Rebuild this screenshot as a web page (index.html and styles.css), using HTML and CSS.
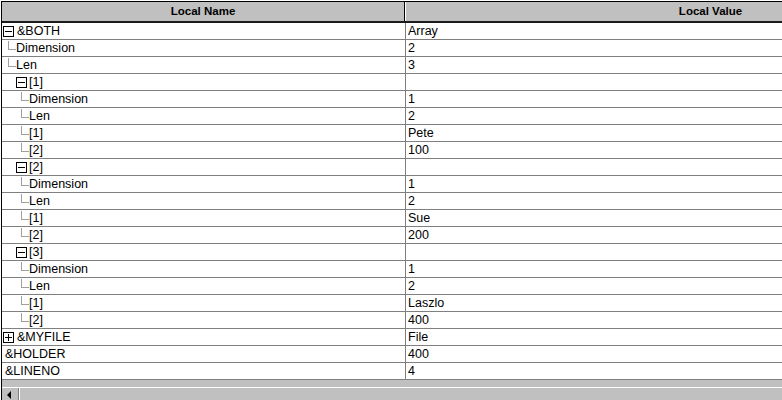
FILE: index.html
```html
<!DOCTYPE html>
<html lang="en">
<head>
  <meta charset="UTF-8" />
  <title>Locals</title>
  <link rel="stylesheet" href="styles.css">
</head>
<body>
  <div class="frame">
    <!-- cabecera -->
    <div class="head">
      <div class="hcell hname">Local Name</div>
      <div class="hcell hvalue">Local Value</div>
    </div>

    <div class="row"><div class="cell name l0"><span class="tog"></span>&amp;BOTH</div><div class="cell value">Array</div></div>
    <div class="row"><div class="cell name l0c"><span class="branch"></span>Dimension</div><div class="cell value">2</div></div>
    <div class="row"><div class="cell name l0c"><span class="branch"></span>Len</div><div class="cell value">3</div></div>

    <div class="row"><div class="cell name l1"><span class="tog"></span>[1]</div><div class="cell value"></div></div>
    <div class="row"><div class="cell name l2"><span class="branch"></span>Dimension</div><div class="cell value">1</div></div>
    <div class="row"><div class="cell name l2"><span class="branch"></span>Len</div><div class="cell value">2</div></div>
    <div class="row"><div class="cell name l2"><span class="branch"></span>[1]</div><div class="cell value">Pete</div></div>
    <div class="row"><div class="cell name l2"><span class="branch"></span>[2]</div><div class="cell value">100</div></div>

    <div class="row"><div class="cell name l1"><span class="tog"></span>[2]</div><div class="cell value"></div></div>
    <div class="row"><div class="cell name l2"><span class="branch"></span>Dimension</div><div class="cell value">1</div></div>
    <div class="row"><div class="cell name l2"><span class="branch"></span>Len</div><div class="cell value">2</div></div>
    <div class="row"><div class="cell name l2"><span class="branch"></span>[1]</div><div class="cell value">Sue</div></div>
    <div class="row"><div class="cell name l2"><span class="branch"></span>[2]</div><div class="cell value">200</div></div>

    <div class="row"><div class="cell name l1"><span class="tog"></span>[3]</div><div class="cell value"></div></div>
    <div class="row"><div class="cell name l2"><span class="branch"></span>Dimension</div><div class="cell value">1</div></div>
    <div class="row"><div class="cell name l2"><span class="branch"></span>Len</div><div class="cell value">2</div></div>
    <div class="row"><div class="cell name l2"><span class="branch"></span>[1]</div><div class="cell value">Laszlo</div></div>
    <div class="row"><div class="cell name l2"><span class="branch"></span>[2]</div><div class="cell value">400</div></div>

    <div class="row"><div class="cell name l0"><span class="tog plus"></span>&amp;MYFILE</div><div class="cell value">File</div></div>
    <div class="row"><div class="cell name lp">&amp;HOLDER</div><div class="cell value">400</div></div>
    <div class="row"><div class="cell name lp">&amp;LINENO</div><div class="cell value">4</div></div>

    <!-- barra de desplazamiento -->
    <div class="hscroll">
      <div class="track">
        <div class="sbtn"><span class="arrow"></span></div>
      </div>
    </div>
  </div>
</body>
</html>
```

FILE: styles.css
```css
html, body { margin: 0; padding: 0; background: #fff; }
body { font-family: "Liberation Sans", Arial, sans-serif; color: #000; }

.frame {
  margin: 1px 0 0 1px;
  width: 781px;
  height: 399px;
  border-left: 1px solid #000;
  border-top: 1px solid #000;
  box-sizing: border-box;
  overflow: hidden;
  display: flex;
  flex-direction: column;
}

.head {
  display: flex;
  flex: none;
  height: 21px;
  background: #c0c0c0;
  border-bottom: 2px solid #1a1a1a;
  box-sizing: border-box;
  width: 1013px;
}
.hcell {
  font-size: 11.5px;
  font-weight: bold;
  line-height: 19px;
  text-align: center;
  box-sizing: border-box;
  flex: none;
}
.hname { width: 403px; border-right: 1px solid #000; }
.hvalue { width: 610px; border-left: 1px solid #fff; }

.row {
  display: flex;
  flex: none;
  width: 1013px;
  height: 17px;
  border-bottom: 1px solid #808080;
  box-sizing: border-box;
  font-size: 12.5px;
  line-height: 16px;
}
.cell { flex: none; box-sizing: border-box; white-space: nowrap; }
.cell.name {
  width: 404px;
  border-right: 1px solid #808080;
  display: flex;
  align-items: flex-start;
}
.cell.value { width: 609px; padding-left: 2px; }

/* sangrías del árbol */
.l0  { padding-left: 1px; }
.l0c { padding-left: 6px; }
.l1  { padding-left: 14px; }
.l2  { padding-left: 19px; }
.lp  { padding-left: 3px; }

.tog {
  position: relative;
  flex: none;
  width: 11px;
  height: 11px;
  margin-top: 3px;
  margin-right: 3px;
  border: 1px solid #000;
  box-sizing: border-box;
  background: #fff;
}
.l1 .tog { margin-right: 2px; }
.tog::before {
  content: "";
  position: absolute;
  left: 1px;
  top: 4px;
  width: 7px;
  height: 1px;
  background: #000;
}
.tog.plus::after {
  content: "";
  position: absolute;
  left: 4px;
  top: 1px;
  width: 1px;
  height: 7px;
  background: #000;
}

.branch {
  flex: none;
  width: 8px;
  height: 9px;
  margin-top: 1px;
  border-left: 1px solid #a0a0a0;
  border-bottom: 1px solid #a0a0a0;
  box-sizing: border-box;
}

.hscroll {
  flex: none;
  height: 20px;
  background: #c0c0c0;
  padding-top: 7px;
  box-sizing: border-box;
}
.track {
  height: 13px;
  border-top: 1px solid #fff;
}
.sbtn {
  width: 17px;
  height: 100%;
  border-right: 1px solid #808080;
  box-shadow: 1px 0 0 #fff;
  box-sizing: border-box;
  display: flex;
  padding-left: 5px;
  padding-top: 3px;
}
.arrow {
  width: 0;
  height: 0;
  border-right: 4px solid #000;
  border-top: 4px solid transparent;
  border-bottom: 4px solid transparent;
}
```
